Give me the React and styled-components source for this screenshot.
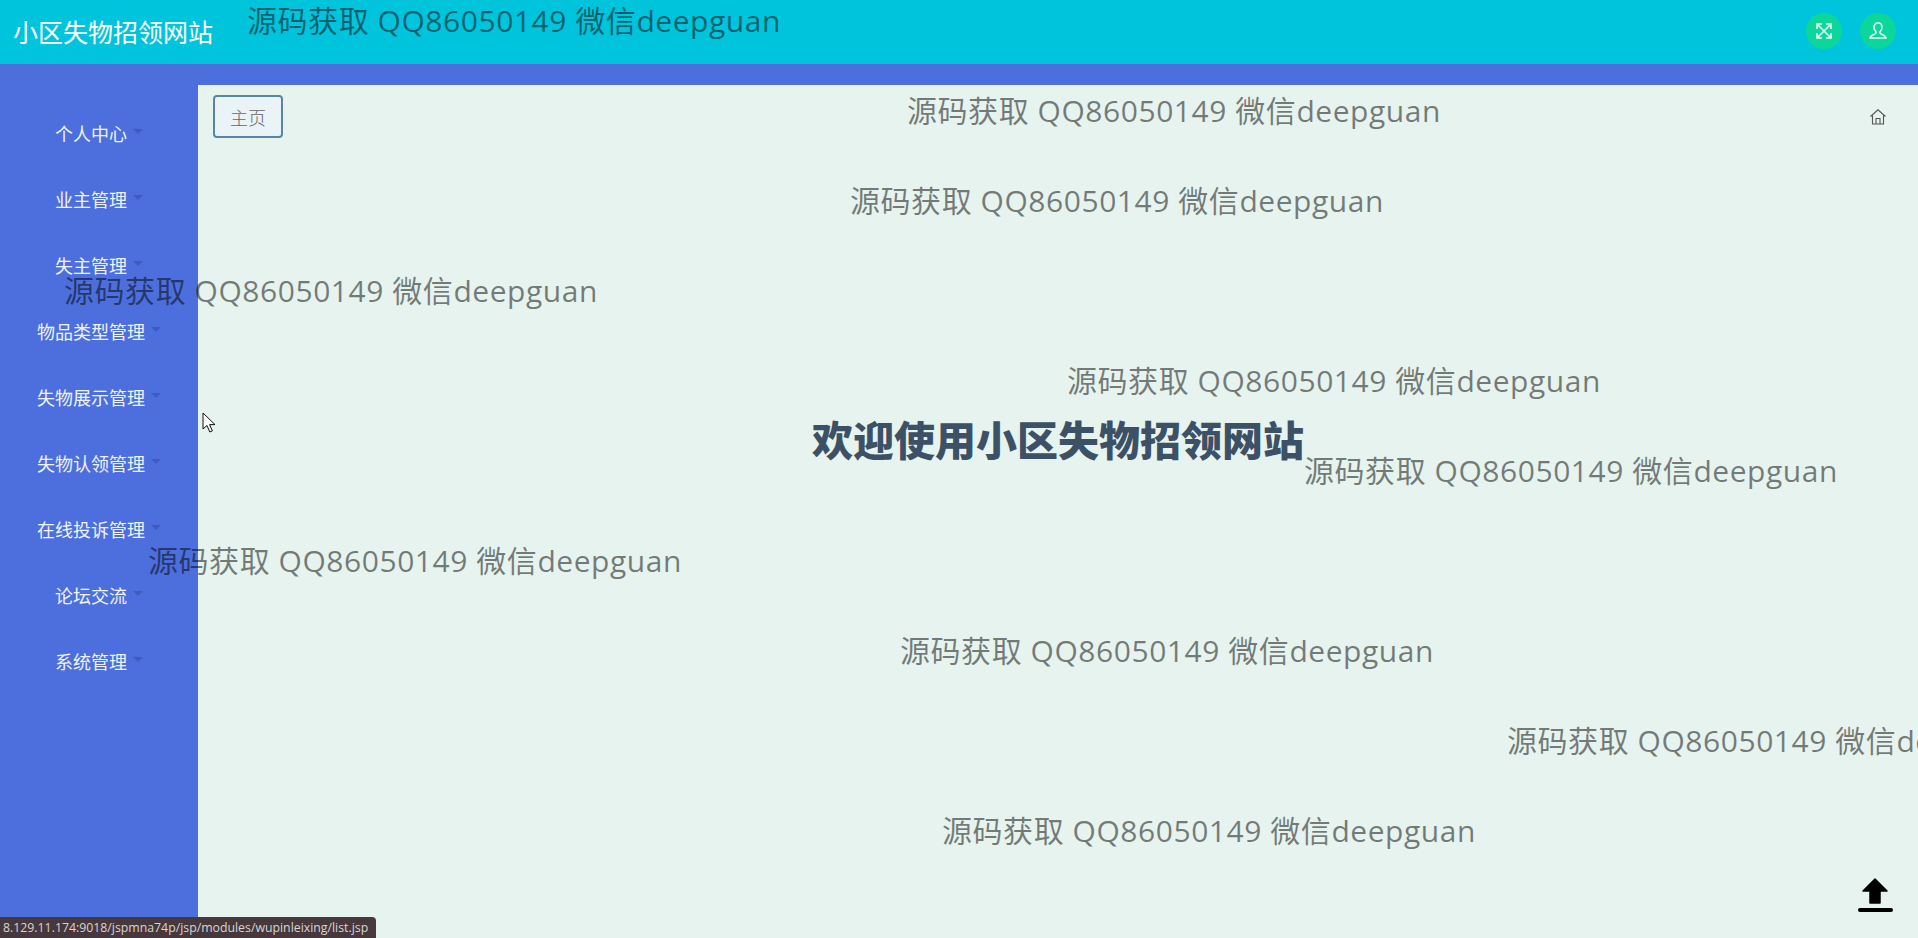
import React from "react";
import styled, { createGlobalStyle } from "styled-components";

const menus = [
  "个人中心",
  "业主管理",
  "失主管理",
  "物品类型管理",
  "失物展示管理",
  "失物认领管理",
  "在线投诉管理",
  "论坛交流",
  "系统管理",
];

const marks = [
  [247, 2],
  [907, 92],
  [850, 182],
  [64, 272],
  [1067, 362],
  [1304, 452],
  [148, 542],
  [900, 632],
  [1507, 722],
  [942, 812],
];

function App() {
  return (
    <Page>
      <GlobalStyle />
      <Header>
        <Title>小区失物招领网站</Title>
        <HeaderIcons>
          <RoundIcon>
            <svg width="20" height="20" viewBox="0 0 20 20" fill="none" stroke="#e8fff6" strokeWidth="1.6">
              <path d="M3 3l14 14M17 3L3 17" />
              <path d="M3 8V3h5M12 3h5v5M17 12v5h-5M8 17H3v-5" />
            </svg>
          </RoundIcon>
          <RoundIcon>
            <svg width="20" height="20" viewBox="0 0 20 20" fill="none" stroke="#e8fff6" strokeWidth="1.5">
              <path d="M10 2c-2.6 0-4 1.8-4 4.2 0 2 .9 3.6 2 4.6v1.4c0 .8-4.8 1.6-6 4.3v.5h16v-.5c-1.2-2.7-6-3.5-6-4.3v-1.4c1.100-1 2-2.600 2-4.600C14 3.800 12.600 2 10 2z" />
            </svg>
          </RoundIcon>
        </HeaderIcons>
      </Header>
      <Body>
        <Sidebar>
          {menus.map((name) => (
            <MenuItem key={name}>
              {name}
              <Caret />
            </MenuItem>
          ))}
        </Sidebar>
        <Main>
          <Panel>
            <Crumbs>
              <HomeButton>主页</HomeButton>
              <svg width="18" height="18" viewBox="0 0 18 18" fill="none" stroke="#555" strokeWidth="1.1">
                <path d="M1.500 8.500L9 1.800l7.500 6.700M3.500 7.500V16h11V7.500" />
                <path d="M7 16v-5.500h4V16" />
              </svg>
            </Crumbs>
            <Welcome>欢迎使用小区失物招领网站</Welcome>
          </Panel>
        </Main>
      </Body>
      {marks.map(([x, y]) => (
        <Watermark key={y} $x={x} $y={y}>
          源码获取 QQ86050149 微信deepguan
        </Watermark>
      ))}
      <Cursor width="14" height="22" viewBox="0 0 14 22">
        <path d="M1 1v16l4-3.500 2.800 6.500 2.600-1.100-2.800-6.300H13z" fill="#fff" stroke="#111" strokeWidth="1" />
      </Cursor>
      <UploadIcon width="38" height="38" viewBox="0 0 38 38">
        <path d="M19 2L31 14h-7v12H14V14H7z" fill="#000" stroke="#000" strokeLinejoin="round" strokeWidth="1.500" />
        <rect x="2" y="31" width="35" height="4" rx="2" fill="#000" />
      </UploadIcon>
      <StatusBar>8.129.11.174:9018/jspmna74p/jsp/modules/wupinleixing/list.jsp</StatusBar>
    </Page>
  );
}

export default App;

const GlobalStyle = createGlobalStyle`
  html, body {
    margin: 0;
    padding: 0;
  }
  body {
    font-family: "Noto Sans CJK SC", "Noto Sans", sans-serif;
  }
`;

const Page = styled.div`
  position: relative;
  width: 1918px;
  height: 938px;
  overflow: hidden;
  display: flex;
  flex-direction: column;
  background: #4d6fdd;
`;

const Header = styled.header`
  height: 64px;
  flex-shrink: 0;
  background: #00c4dc;
  display: flex;
  align-items: center;
  justify-content: space-between;
  padding: 0 22px 2px 13px;
  box-sizing: border-box;
`;

const Title = styled.div`
  color: #fff;
  font-size: 25px;
  line-height: 60px;
`;

const HeaderIcons = styled.div`
  display: flex;
  gap: 18px;
`;

const RoundIcon = styled.div`
  width: 36px;
  height: 36px;
  border-radius: 50%;
  background: #0cd69a;
  display: flex;
  align-items: center;
  justify-content: center;
`;

const Body = styled.div`
  flex: 1;
  display: flex;
  min-height: 0;
`;

const Sidebar = styled.nav`
  width: 198px;
  flex-shrink: 0;
  padding-top: 36px;
`;

const MenuItem = styled.div`
  height: 66px;
  display: flex;
  align-items: center;
  justify-content: center;
  color: #eef3ff;
  font-size: 18px;
`;

const Caret = styled.span`
  width: 0;
  height: 0;
  margin-left: 6px;
  margin-top: -4px;
  border-left: 5px solid transparent;
  border-right: 5px solid transparent;
  border-top: 5px solid #3f5cb8;
`;

const Main = styled.main`
  flex: 1;
  padding-top: 21px;
  display: flex;
`;

const Panel = styled.section`
  flex: 1;
  background: #e6f3ee;
  display: flex;
  flex-direction: column;
`;

const Crumbs = styled.div`
  display: flex;
  align-items: center;
  justify-content: space-between;
  padding: 10px 31px 0 15px;
`;

const HomeButton = styled.div`
  width: 70px;
  height: 43px;
  box-sizing: border-box;
  border: 2px solid #5a86a5;
  border-radius: 4px;
  background: #eaf4f6;
  color: #666;
  font-size: 18px;
  font-weight: 300;
  display: flex;
  align-items: center;
  justify-content: center;
`;

const Welcome = styled.h1`
  margin: 275px 0 0;
  text-align: center;
  color: #3d5166;
  font-size: 41px;
  line-height: 50px;
  font-weight: 900;
`;

const Watermark = styled.div`
  position: absolute;
  left: ${(p) => p.$x}px;
  top: ${(p) => p.$y}px;
  color: rgba(0, 0, 0, 0.5);
  font-family: "Open Sans", "Noto Sans CJK SC", sans-serif;
  font-size: 30px;
  letter-spacing: 0.55px;
  line-height: 38px;
  white-space: nowrap;
  pointer-events: none;
`;

const Cursor = styled.svg`
  position: absolute;
  left: 202px;
  top: 412px;
`;

const UploadIcon = styled.svg`
  position: absolute;
  left: 1856px;
  top: 877px;
`;

const StatusBar = styled.div`
  position: absolute;
  left: 0;
  bottom: 0;
  width: 376px;
  height: 21px;
  box-sizing: border-box;
  padding-left: 3px;
  background: #46383c;
  border-top-right-radius: 4px;
  color: #d8d4d4;
  font-family: "Open Sans", sans-serif;
  font-size: 12.3px;
  line-height: 21px;
  white-space: nowrap;
  overflow: hidden;
`;
